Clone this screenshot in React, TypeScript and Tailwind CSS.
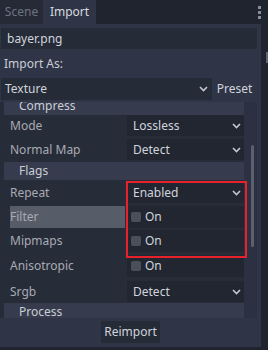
const font = "font-['Noto_Sans','DejaVu_Sans',sans-serif]"

function Chevron() {
  return (
    <svg width="9" height="6" viewBox="0 0 9 6" className="shrink-0">
      <polyline points="1,1 4.5,4.5 8,1" fill="none" stroke="#c3c7cf" strokeWidth="1.6" />
    </svg>
  )
}

function Header({ title, className = '' }: { title: string; className?: string }) {
  return (
    <div className={`h-[18px] shrink-0 bg-[#363c4d] pl-[15px] flex items-center text-[#c9cdd5] ${className}`}>
      {title}
    </div>
  )
}

function SelectRow({ label, value, className = '' }: { label: string; value: string; className?: string }) {
  return (
    <div className={`h-[21px] shrink-0 flex ${className}`}>
      <div className="w-[123px] pl-[6px] flex items-center text-[#a7abb3]">{label}</div>
      <div className="flex-1 bg-[#222631] flex items-center justify-between pl-[6px] pr-[3px] text-[#d0d4dc]">
        <span>{value}</span>
        <Chevron />
      </div>
    </div>
  )
}

function CheckRow({ label, hover = false, className = '' }: { label: string; hover?: boolean; className?: string }) {
  return (
    <div className={`h-[22px] shrink-0 flex ${className}`}>
      <div className="w-[123px] pl-[6px] flex">
        <div className={`w-[115px] flex items-center pl-[0px] text-[#a7abb3] ${hover ? 'bg-[#575c69]' : ''}`}>{label}</div>
      </div>
      <div className="flex-1 bg-[#222631] flex items-center pl-[4px] gap-[4px] text-[#d0d4dc]">
        <span className="w-[10px] h-[10px] rounded-[2px] bg-[#4a4f5c]" />
        <span>On</span>
      </div>
    </div>
  )
}

export default function App() {
  return (
    <div className={`w-[268px] h-[350px] bg-[#20242f] relative overflow-hidden text-[12px] leading-none ${font}`}>
      {/* tabs */}
      <div className="h-[24px] flex items-stretch">
        <div className="w-[43px] bg-[#262a36] flex items-center justify-center text-[#6e7382]">Scene</div>
        <div className="w-[53px] bg-[#2f3547] flex items-center justify-center text-[#d6d9df]">Import</div>
        <div className="flex-1" />
        <div className="w-[10px] flex flex-col items-start pt-[6px] gap-[2px]">
          <span className="w-[3px] h-[3px] bg-[#8a8d95]" />
          <span className="w-[3px] h-[3px] bg-[#8a8d95]" />
          <span className="w-[3px] h-[3px] bg-[#8a8d95]" />
        </div>
      </div>

      <div className="flex h-[323px]">
        {/* import panel */}
        <div className="w-[261px] bg-[#2f3547] flex flex-col pt-[4px]">
          <div className="ml-[1px] w-[256px] h-[21px] bg-[#262b38] flex items-center pl-[6px] text-[#d0d4dc]">bayer.png</div>
          <div className="h-[29px] flex items-center pl-[4px] text-[#c9cdd5]">Import As:</div>
          <div className="h-[22px] flex ml-[1px] w-[256px]">
            <div className="w-[211px] bg-[#262b38] flex items-center justify-between pl-[4px] pr-[4px] text-[#d0d4dc]">
              <span>Texture</span>
              <Chevron />
            </div>
            <div className="flex-1 flex items-center justify-center text-[#d0d4dc]">Preset</div>
          </div>

          {/* inspector */}
          <div className="mt-[2px] h-[216px] w-[257px] flex">
            <div className="w-[244px] bg-[#272c39] pl-[4px] overflow-hidden flex flex-col">
              <Header title="Compress" className="-mt-[5px]" />
              <SelectRow label="Mode" value="Lossless" />
              <SelectRow label="Normal Map" value="Detect" className="mt-[3px]" />
              <Header title="Flags" className="mt-[2px]" />
              <SelectRow label="Repeat" value="Enabled" className="mt-[2px]" />
              <CheckRow label="Filter" hover className="mt-[3px]" />
              <CheckRow label="Mipmaps" className="mt-[2px]" />
              <CheckRow label="Anisotropic" className="mt-[3px]" />
              <SelectRow label="Srgb" value="Detect" className="mt-[4px]" />
              <Header title="Process" className="mt-[1px]" />
            </div>
            <div className="flex-1 bg-[#2b3142] flex justify-end pr-[3px]">
              <div className="mt-[43px] w-[3px] h-[102px] rounded-full bg-[#5b606c]" />
            </div>
          </div>

          <div className="flex-1 flex items-start justify-center pt-[3px]">
            <div className="w-[59px] h-[22px] bg-[#262b38] flex items-center justify-center text-[#d0d4dc]">Reimport</div>
          </div>
        </div>

        {/* outer scroll */}
        <div className="flex-1 flex justify-end">
          <div className="mt-[28px] w-[2px] h-[11px] bg-[#5f6470]" />
        </div>
      </div>

      {/* annotation */}
      <div className="absolute left-[126px] top-[181px] w-[121px] h-[77px] border-2 border-[#e8222b]" />
    </div>
  )
}
